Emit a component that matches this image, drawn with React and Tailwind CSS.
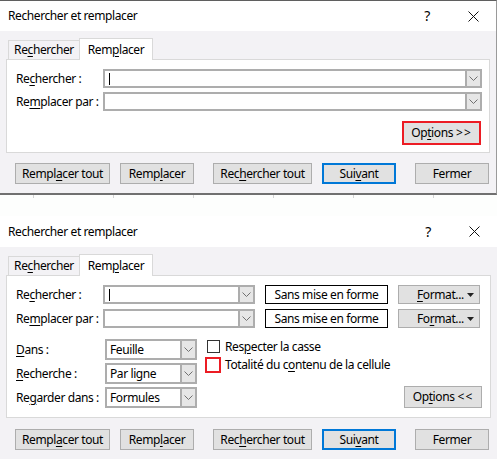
import React from "react";

const U = ({ children }) => (
  <span className="underline underline-offset-[2px] decoration-1">{children}</span>
);

function Chevron() {
  return (
    <svg width="9" height="5" viewBox="0 0 9 5" className="block">
      <path d="M0.5 0.5 L4.5 4.5 L8.5 0.5" fill="none" stroke="#707070" strokeWidth="1" />
    </svg>
  );
}

function Combo({ className, cursor, children }) {
  return (
    <div className={"flex shrink-0 bg-white border-2 border-[#adadad] " + className}>
      <div className="flex-1 flex items-center pl-[3px]">
        {cursor && <div className="w-px h-[12px] bg-black ml-[1px]" />}
        {children}
      </div>
      <div className="w-[15px] bg-[#e6e6e6] border-l-2 border-[#adadad] flex items-center justify-center">
        <Chevron />
      </div>
    </div>
  );
}

function Btn({ className, children }) {
  return (
    <div className={"flex shrink-0 items-center justify-center bg-[#e1e1e1] border border-[#adadad] " + className}>
      {children}
    </div>
  );
}

function TitleBar({ className }) {
  return (
    <div className={"bg-white flex items-center " + className}>
      <span className="pl-2">Rechercher et remplacer</span>
      <div className="ml-auto flex h-full">
        <div className="w-[46px] flex items-center justify-center text-[14px]">?</div>
        <div className="w-[46px] flex items-center justify-center">
          <svg width="11" height="11" viewBox="0 0 11 11">
            <path d="M0.5 0.5 L10.5 10.5 M10.5 0.5 L0.5 10.5" stroke="#111" strokeWidth="1" />
          </svg>
        </div>
      </div>
    </div>
  );
}

function Tabs() {
  return (
    <div className="flex items-end h-[21px] pl-[2px]">
      <div className="w-[71px] h-[19px] border-t border-l border-[#d9d9d9] flex items-center justify-center">
        Re<U>c</U>hercher
      </div>
      <div className="w-[74px] h-[22px] -mb-px relative z-10 bg-white border border-b-0 border-[#d9d9d9] flex items-center justify-center">
        Rem<U>p</U>lacer
      </div>
    </div>
  );
}

function BottomButtons() {
  return (
    <div className="flex pl-[15px] h-[21px]">
      <Btn className="w-[95px]">
        Rempl<U>a</U>cer tout
      </Btn>
      <Btn className="w-[74px] ml-[10px]">
        Remp<U>l</U>acer
      </Btn>
      <Btn className="w-[99px] ml-[19px]">
        Rec<U>h</U>ercher tout
      </Btn>
      <div className="w-[74px] ml-[10px] flex items-center justify-center bg-[#e1e1e1] border-2 border-[#0078d7]">
        Sui<U>v</U>ant
      </div>
      <Btn className="w-[74px] ml-[19px]">Fermer</Btn>
    </div>
  );
}

function SmallTriangle() {
  return (
    <svg width="7" height="4" viewBox="0 0 7 4" className="block">
      <path d="M0 0 L7 0 L3.5 4 Z" fill="#222" />
    </svg>
  );
}

export default function App() {
  return (
    <div className="w-[497px] h-[459px] bg-[#fdfefd] overflow-hidden whitespace-nowrap font-['Noto_Sans',sans-serif] text-[12px] tracking-[-0.4px] leading-none text-black">
      {/* Dialog compact */}
      <div className="border-t border-t-[#5f5f5f] border-r border-r-[#9a9a9a] border-b-2 border-b-[#707070]">
        <TitleBar className="h-[30px]" />
        <div className="bg-[#f3f2f5] pt-[7px] pb-[9px]">
          <div className="mx-[6px]">
            <Tabs />
            <div className="bg-white border border-[#d9d9d9] h-[94px] pt-[9px] pl-[9px] pr-[7px]">
              <div className="flex items-center h-[19px]">
                <span className="w-[87px] shrink-0">
                  Re<U>c</U>hercher :
                </span>
                <Combo className="flex-1 h-[19px]" cursor />
              </div>
              <div className="flex items-center h-[19px] mt-[4px]">
                <span className="w-[87px] shrink-0">
                  Re<U>m</U>placer par :
                </span>
                <Combo className="flex-1 h-[19px]" />
              </div>
              <div className="flex justify-end mt-[10px] pr-[1px]">
                <div className="w-[79px] h-[24px] border-2 border-[#ec1c24] bg-[#e1e1e1] flex items-center justify-center">
                  Op<U>t</U>ions <span className="ml-[3px] tracking-[1px]">&gt;&gt;</span>
                </div>
              </div>
            </div>
          </div>
          <div className="mt-[10px]">
            <BottomButtons />
          </div>
        </div>
      </div>

      {/* sheet grid behind */}
      <div className="flex h-[3px]">
        <div className="w-[34px] border-r border-[#d4d4d4]" />
        <div className="w-[80px] border-r border-[#d4d4d4]" />
        <div className="w-[80px] border-r border-[#d4d4d4]" />
        <div className="w-[80px] border-r border-[#d4d4d4]" />
        <div className="w-[80px] border-r border-[#d4d4d4]" />
        <div className="w-[80px] border-r border-[#d4d4d4]" />
      </div>

      {/* Dialog expanded */}
      <div className="mt-[18px]">
        <TitleBar className="h-[31px]" />
        <div className="bg-[#f3f2f5] pt-[7px] pb-[9px]">
          <div className="mx-[6px]">
            <Tabs />
            <div className="bg-white border border-[#d9d9d9] h-[143px] pt-[9px] pl-[9px] pr-[8px]">
              <div className="flex items-center h-[19px]">
                <span className="w-[87px] shrink-0">
                  Re<U>c</U>hercher :
                </span>
                <Combo className="w-[152px] h-[19px]" cursor />
                <div className="w-[123px] h-[19px] shrink-0 ml-[10px] border border-black bg-white flex items-center justify-center">
                  Sans mise en forme
                </div>
                <Btn className="w-[82px] h-[19px] ml-[10px] !justify-start pl-[18px] pr-[5px]">
                  <span>
                    <U>F</U>ormat...
                  </span>
                  <span className="ml-auto">
                    <SmallTriangle />
                  </span>
                </Btn>
              </div>
              <div className="flex items-center h-[19px] mt-[5px]">
                <span className="w-[87px] shrink-0">
                  Re<U>m</U>placer par :
                </span>
                <Combo className="w-[152px] h-[19px]" />
                <div className="w-[123px] h-[19px] shrink-0 ml-[10px] border border-black bg-white flex items-center justify-center">
                  Sans mise en forme
                </div>
                <Btn className="w-[82px] h-[19px] ml-[10px] !justify-start pl-[18px] pr-[5px]">
                  <span>
                    Fo<U>r</U>mat...
                  </span>
                  <span className="ml-auto">
                    <SmallTriangle />
                  </span>
                </Btn>
              </div>

              <div className="flex mt-[11px]">
                <div className="flex flex-col gap-[3px]">
                  <div className="flex items-center h-[21px]">
                    <span className="w-[89px] shrink-0">
                      <U>D</U>ans :
                    </span>
                    <Combo className="w-[92px] h-[21px]">Feuille</Combo>
                  </div>
                  <div className="flex items-center h-[21px]">
                    <span className="w-[89px] shrink-0">
                      <U>R</U>echerche :
                    </span>
                    <Combo className="w-[92px] h-[21px]">Par ligne</Combo>
                  </div>
                  <div className="flex items-center h-[21px]">
                    <span className="w-[89px] shrink-0">
                      Re<U>g</U>arder dans :
                    </span>
                    <Combo className="w-[92px] h-[21px]">Formules</Combo>
                  </div>
                </div>

                <div className="flex flex-col ml-[10px] pt-[1px]">
                  <div className="flex items-center h-[13px]">
                    <div className="w-[13px] h-[13px] border border-[#333] bg-white" />
                    <span className="ml-[5px]">
                      Res<U>p</U>ecter la casse
                    </span>
                  </div>
                  <div className="flex items-center h-[16px] mt-[4px] -ml-[2px]">
                    <div className="w-[16px] h-[16px] border-2 border-[#ec1c24] bg-white" />
                    <span className="ml-[4px]">
                      Totalité du c<U>o</U>ntenu de la cellule
                    </span>
                  </div>
                </div>

                <Btn className="w-[78px] h-[22px] ml-auto self-end">
                  Op<U>t</U>ions <span className="ml-[3px] tracking-[1px]">&lt;&lt;</span>
                </Btn>
              </div>
            </div>
          </div>
          <div className="mt-[11px]">
            <BottomButtons />
          </div>
        </div>
      </div>
    </div>
  );
}
